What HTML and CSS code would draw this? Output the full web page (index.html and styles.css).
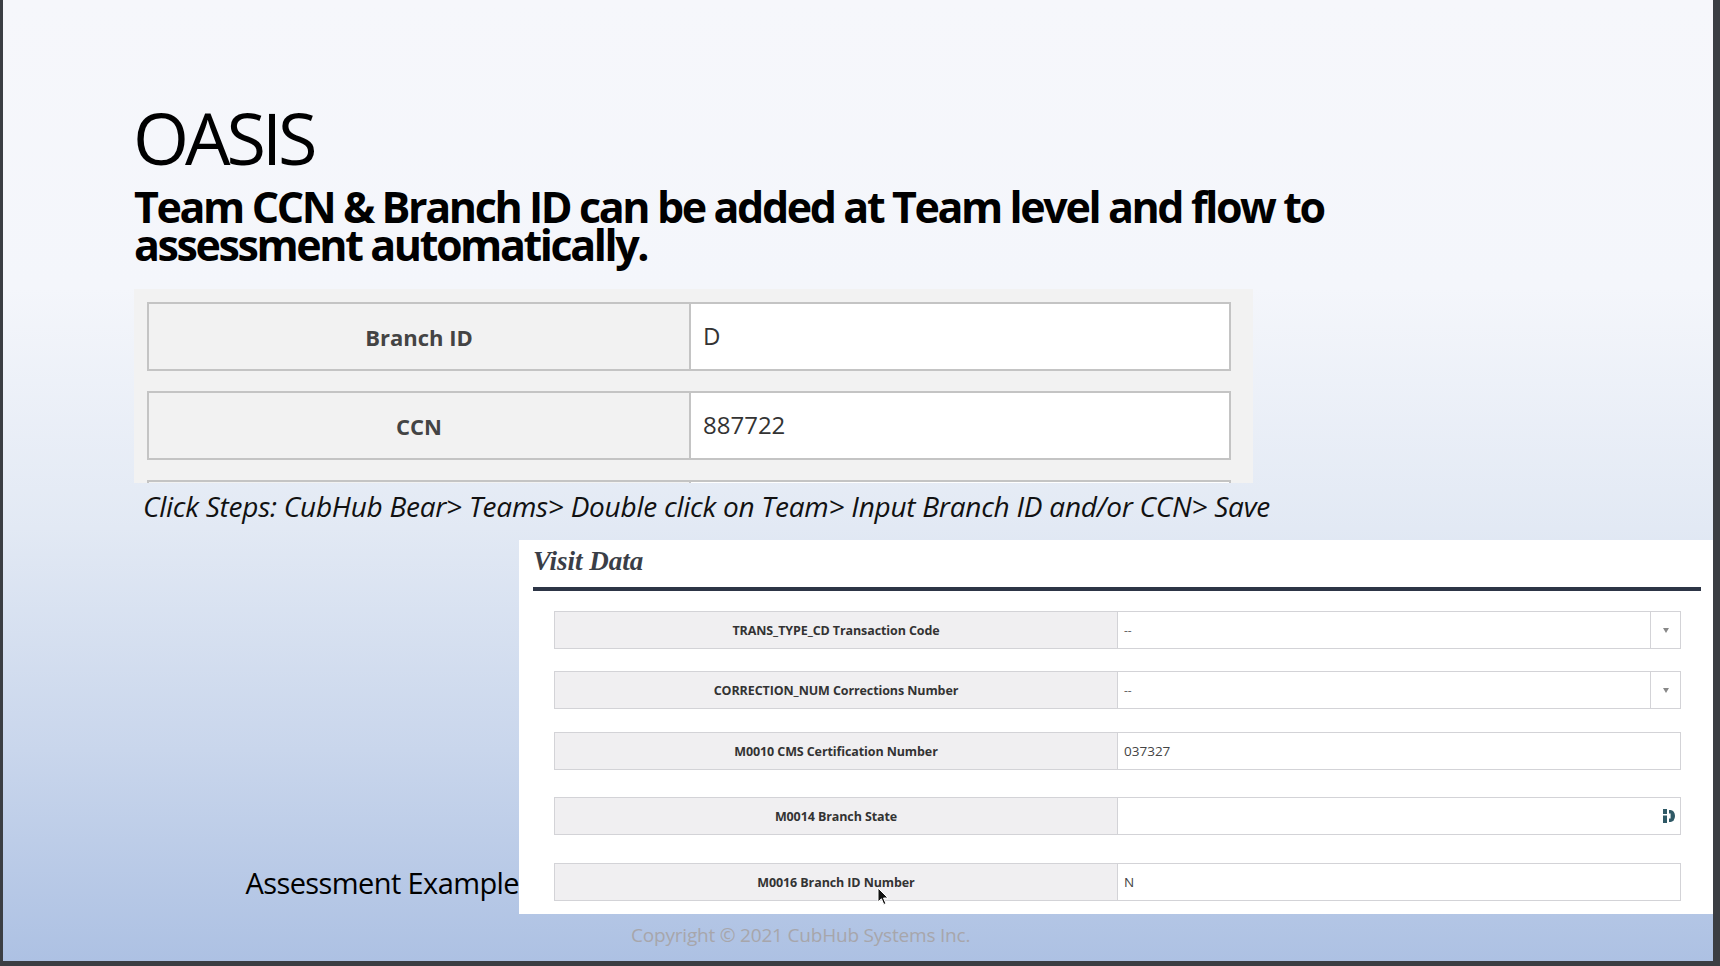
FILE: index.html
```html
<!DOCTYPE html>
<html lang="en">
<head>
<meta charset="utf-8">
<title>OASIS</title>
<link rel="stylesheet" href="styles.css">
</head>
<body>
<div class="frame">
  <div class="slide">
    <h1 class="title">OASIS</h1>
    <p class="subtitle"><span class="sub-line">Team CCN &amp; Branch ID can be added at Team level and flow to</span><span class="sub-line">assessment automatically.</span></p>

    <div class="team-shot">
      <div class="team-row">
        <div class="team-label">Branch ID</div>
        <div class="team-value">D</div>
      </div>
      <div class="team-row">
        <div class="team-label">CCN</div>
        <div class="team-value">887722</div>
      </div>
      <div class="team-row">
        <div class="team-label"></div>
        <div class="team-value"></div>
      </div>
    </div>

    <p class="steps">Click Steps: CubHub Bear&gt; Teams&gt; Double click on Team&gt; Input Branch ID and/or CCN&gt; Save</p>

    <div class="lower">
      <div class="assess-col"><span class="assess">Assessment Example</span></div>
      <div class="visit">
        <h2 class="visit-title">Visit Data</h2>
        <div class="visit-rule"></div>
        <div class="visit-rows">
          <div class="vrow r1">
            <div class="vlabel">TRANS_TYPE_CD Transaction Code</div>
            <div class="vvalue"><span class="dash">--</span><span class="arrow-box"><span class="arrow"></span></span></div>
          </div>
          <div class="vrow r2">
            <div class="vlabel">CORRECTION_NUM Corrections Number</div>
            <div class="vvalue"><span class="dash">--</span><span class="arrow-box"><span class="arrow"></span></span></div>
          </div>
          <div class="vrow r3">
            <div class="vlabel">M0010 CMS Certification Number</div>
            <div class="vvalue"><span class="val">037327</span></div>
          </div>
          <div class="vrow r4">
            <div class="vlabel">M0014 Branch State</div>
            <div class="vvalue"><span class="val"></span>
              <svg class="field-icon" width="12" height="14" viewBox="0 0 12 14">
                <rect x="0" y="0" width="4" height="5" fill="#2f5966"/>
                <rect x="0" y="6.5" width="4" height="7.5" fill="#2f5966"/>
                <path d="M6 1 H7.5 A4.5 6 0 0 1 7.5 13 H6 Z" fill="#2f5966"/>
                <rect x="6" y="4.5" width="1.6" height="5" fill="#ffffff"/>
              </svg>
            </div>
          </div>
          <div class="vrow r5">
            <div class="vlabel">M0016 Branch ID Number</div>
            <div class="vvalue"><span class="val">N</span></div>
            <svg class="cursor" width="12" height="19" viewBox="0 0 12 19">
              <path d="M1 1 L1 15 L4.4 11.8 L6.8 17.5 L8.9 16.6 L6.5 11 L11 11 Z" fill="#111" stroke="#fff" stroke-width="1"/>
            </svg>
          </div>
        </div>
      </div>
    </div>

    <p class="copyright">Copyright © 2021 CubHub Systems Inc.</p>
  </div>
</div>
</body>
</html>
```

FILE: styles.css
```css
html, body {
  margin: 0;
  padding: 0;
}

body {
  width: 1720px;
  height: 966px;
  overflow: hidden;
  background: #3b3e43;
}

.frame {
  padding-left: 3px;
  width: 1710px;
  height: 961px;
}

.slide {
  width: 1710px;
  height: 961px;
  background: linear-gradient(to bottom, #f6f7fb 0%, #f4f6fb 30%, #e2e9f4 55%, #c9d6ec 78%, #adc1e3 100%);
  display: flex;
  flex-direction: column;
  overflow: hidden;
}

.title {
  margin: 97px 0 0 130px;
  font-family: "Open Sans", sans-serif;
  font-weight: 400;
  font-size: 72px;
  line-height: 80px;
  letter-spacing: -4px;
  color: #000;
}

.subtitle {
  margin: 11px 0 0 131px;
  display: flex;
  flex-direction: column;
  font-family: "Open Sans", sans-serif;
  font-weight: 700;
  font-size: 43px;
  letter-spacing: -2.4px;
  color: #000;
}

.sub-line {
  display: block;
  height: 38px;
  line-height: 38px;
  white-space: nowrap;
}

.team-shot {
  margin: 25px 0 0 131px;
  width: 1119px;
  height: 194px;
  box-sizing: border-box;
  padding: 13px 22px 0 13px;
  background: #f2f2f2;
  overflow: hidden;
  display: flex;
  flex-direction: column;
  gap: 20px;
}

.team-row {
  display: flex;
  flex: none;
  height: 69px;
  box-sizing: border-box;
  border: 2px solid #c4c4c4;
  background: #f2f2f2;
}

.team-label {
  width: 540px;
  border-right: 2px solid #c4c4c4;
  display: flex;
  align-items: center;
  justify-content: center;
  font-family: "Open Sans", sans-serif;
  font-weight: 700;
  font-size: 22px;
  color: #444;
}

.team-value {
  flex: 1;
  background: #fff;
  display: flex;
  align-items: center;
  padding-left: 12px;
  font-family: "Open Sans", sans-serif;
  font-size: 24px;
  color: #333;
  padding-bottom: 2px;
}

.steps {
  margin: 6px 0 0 140px;
  font-family: "Open Sans", sans-serif;
  font-style: italic;
  font-size: 28px;
  line-height: 34px;
  letter-spacing: -0.25px;
  color: #111;
}

.lower {
  margin-top: 17px;
  display: flex;
  height: 374px;
}

.assess-col {
  width: 516px;
  display: flex;
  flex-direction: column;
  justify-content: flex-end;
  align-items: flex-end;
  padding-bottom: 13px;
  box-sizing: border-box;
}

.assess {
  font-family: "Open Sans", sans-serif;
  font-size: 29px;
  line-height: 36px;
  color: #000;
  letter-spacing: -0.6px;
}

.visit {
  width: 1194px;
  background: #fff;
  box-sizing: border-box;
  padding: 1px 0 13px 14px;
}

.visit-title {
  margin: 0;
  font-family: "Liberation Serif", serif;
  font-weight: 700;
  font-style: italic;
  font-size: 27px;
  line-height: 40px;
  color: #3a3e47;
}

.visit-rule {
  margin-top: 6px;
  width: 1168px;
  height: 4px;
  background: #2d3546;
}

.visit-rows {
  margin: 20px 0 0 21px;
  width: 1127px;
  display: flex;
  flex-direction: column;
}

.vrow {
  position: relative;
  display: flex;
  height: 38px;
  box-sizing: border-box;
  border: 1px solid #d3d3d7;
}

.r2 { margin-top: 22px; }
.r3 { margin-top: 23px; }
.r4 { margin-top: 27px; }
.r5 { margin-top: 28px; }

.vlabel {
  width: 562px;
  background: #f0eff1;
  border-right: 1px solid #d3d3d7;
  display: flex;
  align-items: center;
  justify-content: center;
  font-family: "Open Sans", sans-serif;
  font-weight: 700;
  font-size: 12.5px;
  letter-spacing: -0.1px;
  color: #333;
}

.vvalue {
  flex: 1;
  background: #fff;
  display: flex;
  align-items: center;
  justify-content: space-between;
  font-family: "Open Sans", sans-serif;
  color: #444;
}

.dash {
  padding-left: 6px;
  font-size: 12px;
  color: #666;
}

.val {
  padding-left: 6px;
  font-size: 13.5px;
  color: #444;
}

.arrow-box {
  width: 29px;
  align-self: stretch;
  border-left: 1px solid #d3d3d7;
  display: flex;
  align-items: center;
  justify-content: center;
}

.arrow {
  width: 0;
  height: 0;
  border-left: 3px solid transparent;
  border-right: 3px solid transparent;
  border-top: 5px solid #888;
}

.field-icon {
  margin-right: 5px;
}

.cursor {
  position: absolute;
  left: 322px;
  top: 23px;
}

.copyright {
  margin: 6px 0 0 628px;
  font-family: "Open Sans", sans-serif;
  font-size: 19px;
  line-height: 30px;
  letter-spacing: -0.2px;
  color: #a7a6ab;
}
```
